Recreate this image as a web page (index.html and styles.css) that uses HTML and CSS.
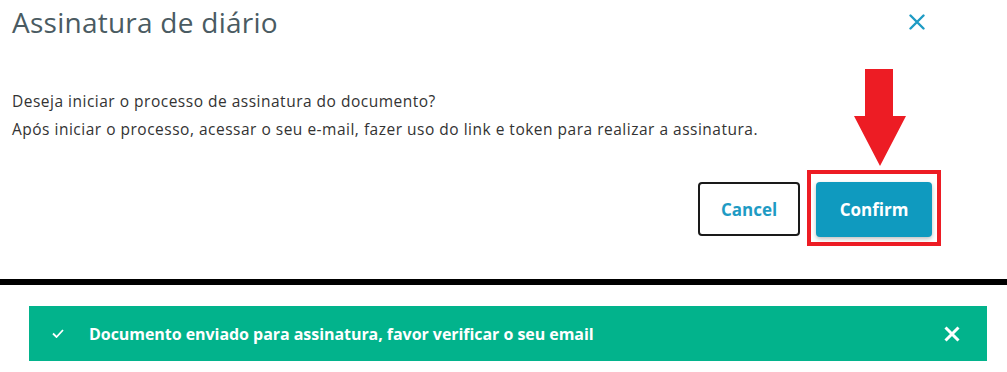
FILE: index.html
```html
<!DOCTYPE html>
<html lang="pt">
<head>
  <meta charset="UTF-8">
  <title>Assinatura de diário</title>
  <link rel="stylesheet" href="styles.css">
</head>
<body>
  <!-- Modal -->
  <div class="modal">
    <div class="modal-header">
      <h2 class="modal-title">Assinatura de diário</h2>
      <button class="close-btn" type="button" aria-label="Fechar">
        <svg width="16" height="16" viewBox="0 0 16 16"><path d="M1.5 1.5 L14.5 14.5 M14.5 1.5 L1.5 14.5" stroke="#1e9bc4" stroke-width="2.4" stroke-linecap="round"/></svg>
      </button>
    </div>
    <div class="modal-body">
      <p>Deseja iniciar o processo de assinatura do documento?</p>
      <p>Após iniciar o processo, acessar o seu e-mail, fazer uso do link e token para realizar a assinatura.</p>
    </div>
    <div class="modal-footer">
      <button class="btn btn-cancel" type="button">Cancel</button>
      <div class="highlight">
        <svg class="arrow" width="54" height="98" viewBox="0 0 54 98"><path d="M12 0 H40 V47 H53 L27 97 L1 47 H12 Z" fill="#ed1c24"/></svg>
        <button class="btn btn-confirm" type="button">Confirm</button>
      </div>
    </div>
  </div>

  <div class="divider"></div>

  <!-- Toast -->
  <div class="toast-wrap">
    <div class="toast">
      <svg class="check" width="12" height="9" viewBox="0 0 12 9"><path d="M1 4.5 L4.5 8 L11 1" fill="none" stroke="#fff" stroke-width="1.8"/></svg>
      <span class="toast-text">Documento enviado para assinatura, favor verificar o seu email</span>
      <svg class="toast-close" width="16" height="16" viewBox="0 0 16 16"><path d="M1.5 1.5 L14.5 14.5 M14.5 1.5 L1.5 14.5" stroke="#fff" stroke-width="3"/></svg>
    </div>
  </div>
</body>
</html>
```

FILE: styles.css
```css
body
{
  margin: 0;
  background: #fff;
  font-family: "Open Sans", Lato, sans-serif;
}

/* Modal */
.modal
{
  height: 279px;
  box-sizing: border-box;
}

.modal-header
{
  display: flex;
  justify-content: space-between;
  align-items: flex-start;
  height: 50px;
  padding: 3px 0 0 12px;
}

.modal-title
{
  margin: 0;
  font-size: 28px;
  font-weight: 400;
  color: #4a5b62;
  letter-spacing: 0.25px;
}

.close-btn
{
  background: none;
  border: none;
  padding: 0;
  margin: 11px 82px 0 0;
  width: 16px;
  height: 16px;
  cursor: pointer;
}

.close-btn svg
{
  display: block;
}

.modal-body
{
  padding: 34px 12px 0 12px;
  color: #333;
  font-size: 15.5px;
  letter-spacing: 0.5px;
}

.modal-body p
{
  margin: 0;
  line-height: 28px;
}

.modal-footer
{
  display: flex;
  justify-content: flex-end;
  align-items: flex-end;
  gap: 7px;
  padding: 0 66px 0 0;
  margin-top: 27px;
}

.btn
{
  font-family: inherit;
  font-size: 17px;
  font-weight: 700;
  border-radius: 4px;
  cursor: pointer;
}

.btn-cancel
{
  width: 102px;
  height: 54px;
  margin-bottom: 10px;
  background: #fff;
  border: 2px solid #1a1a1a;
  color: #1e9bc4;
}

.highlight
{
  position: relative;
  border: 4px solid #ed1c24;
  padding: 8px 5px 5px 5px;
}

.arrow
{
  position: absolute;
  left: 42px;
  top: -105px;
}

.btn-confirm
{
  display: block;
  width: 116px;
  height: 55px;
  background: #0f9abf;
  border: none;
  color: #fff;
  box-shadow: 0 2px 4px rgba(0, 0, 0, 0.25);
}

.divider
{
  height: 6px;
  background: #000;
}

/* Toast */
.toast-wrap
{
  padding: 21px 20px 0 29px;
}

.toast
{
  display: flex;
  align-items: center;
  height: 55px;
  background: #02b38c;
  color: #fff;
  padding: 0 27px 0 23px;
}

.check
{
  margin-right: 25px;
}

.toast-text
{
  flex: 1;
  font-size: 16px;
  font-weight: 700;
  letter-spacing: -0.05px;
}
```
